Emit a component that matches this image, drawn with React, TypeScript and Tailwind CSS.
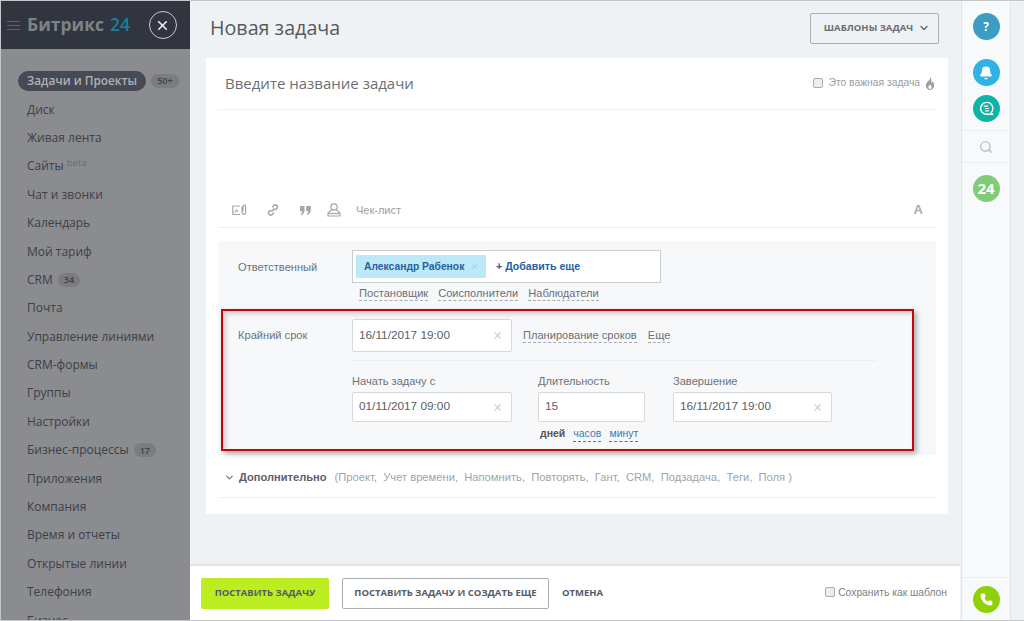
import { X, Phone, Bell, Search, ChevronDown } from 'lucide-react'

const sans = 'font-["Open_Sans",sans-serif]'
const arial = 'font-["Liberation_Sans",Arial,sans-serif]'

const menu: { label: string; badge?: string; sup?: string; active?: boolean }[] = [
  { label: 'Задачи и Проекты', badge: '50+', active: true },
  { label: 'Диск' },
  { label: 'Живая лента' },
  { label: 'Сайты', sup: 'beta' },
  { label: 'Чат и звонки' },
  { label: 'Календарь' },
  { label: 'Мой тариф' },
  { label: 'CRM', badge: '34' },
  { label: 'Почта' },
  { label: 'Управление линиями' },
  { label: 'CRM-формы' },
  { label: 'Группы' },
  { label: 'Настройки' },
  { label: 'Бизнес-процессы', badge: '17' },
  { label: 'Приложения' },
  { label: 'Компания' },
  { label: 'Время и отчеты' },
  { label: 'Открытые линии' },
  { label: 'Телефония' },
  { label: 'Бизнес' },
]

function Sidebar() {
  return (
    <aside className={`w-[189px] shrink-0 h-full bg-[#8b8c8f] overflow-hidden ${sans}`}>
      <div className="h-[48px] bg-[#30353f] flex items-center pl-[6px] whitespace-nowrap">
        <div className="w-[13px] flex flex-col gap-[3px] mr-[7px]">
          <span className="h-px bg-[#5d6167]" />
          <span className="h-px bg-[#5d6167]" />
          <span className="h-px bg-[#5d6167]" />
        </div>
        <span className="text-[17.5px] font-bold text-[#7f8286] leading-none">Битрикс</span>
        <span className="text-[17.5px] font-semibold text-[#1b7d9f] leading-none ml-[6px]">24</span>
        <div className="ml-[19px] w-[28px] h-[28px] rounded-full border-[1.5px] border-[#c8cacc] flex items-center justify-center">
          <X size={15} strokeWidth={2.6} className="text-[#f0f0f0]" />
        </div>
      </div>
      <nav className="pt-[18px]">
        {menu.map(m => (
          <div key={m.label} className="h-[28.4px] flex items-center pl-[26px] text-[12px] text-[#3d4045] whitespace-nowrap">
            {m.active ? (
              <span className="-ml-[9px] h-[20px] pl-[9px] pr-[9px] rounded-full bg-[#454a54] text-[#b0b1b4] text-[11.8px] font-semibold flex items-center">{m.label}</span>
            ) : (
              <span>{m.label}</span>
            )}
            {m.sup && <span className="text-[9.5px] text-[#6a6b6e] ml-[3px] mb-[6px]">{m.sup}</span>}
            {m.badge && (
              <span className="ml-[5px] h-[14px] px-[6px] rounded-full bg-[#7b7c7f] text-[9px] font-semibold text-[#3d4045] flex items-center">{m.badge}</span>
            )}
          </div>
        ))}
      </nav>
    </aside>
  )
}

function Dashed({ children, blue }: { children: string; blue?: boolean }) {
  return (
    <span className={`border-b border-dashed leading-[14px] whitespace-nowrap ${blue ? 'text-[#3f78b8] border-[#3f78b8]' : 'text-[#6b7078] border-[#a5aab0]'}`}>{children}</span>
  )
}

function DateInput({ value, w, h }: { value: string; w: string; h: string }) {
  return (
    <div className={`${w} ${h} bg-white border border-[#d5d9dc] rounded-[2px] flex items-center justify-between pl-[6px] pr-[8px] text-[11.8px] text-[#5a5e65]`}>
      <span>{value}</span>
      <X size={11} strokeWidth={2.5} className="text-[#cfd2d5]" />
    </div>
  )
}

function Form() {
  return (
    <div className={`ml-[16px] mr-[12px] bg-white px-[12px] pb-[16px] ${arial}`}>
      <div className="h-[51px] ml-[7px] flex items-center justify-between pb-[1px]">
        <span className={`text-[15px] text-[#6b6f74] ${sans}`}>Введите название задачи</span>
        <div className="flex items-center text-[10.3px] text-[#9a9da1] mr-[1px] whitespace-nowrap">
          <span className="w-[10px] h-[10px] rounded-[2px] bg-[#eceef0] border border-[#a8abaf] mr-[6px]" />
          Это важная задача
          <svg width="10" height="13" viewBox="0 0 10 13" className="ml-[5px]">
            <path d="M5.2 0c.4 2-1 3-2.4 4.6C1.600 6 .8 7.200.8 8.600.8 11 2.700 13 5 13s4.200-2 4.200-4.400c0-2-1-3.400-1.700-4.300-.2 1-.7 1.500-1.200 1.700C6.600 4 6.500 1.600 5.200 0Z" fill="#9a9da1" />
            <path d="M5 7.500c-1 1-1.600 1.700-1.600 2.800A1.600 1.600 0 0 0 5 12a1.600 1.600 0 0 0 1.600-1.700c0-1.100-.7-1.800-1.600-2.800Z" fill="#fff" />
          </svg>
        </div>
      </div>
      <div className="border-t border-[#eef0f2] h-[78px]" />
      <div className="h-[41px] pt-[6px] border-b border-[#eef0f2] flex items-center pl-[14px] text-[#a3a7ab]">
        <svg width="15" height="13" viewBox="0 0 15 13" fill="none" stroke="currentColor" strokeWidth="1.2">
          <path d="M8 2H.8v8.500H8" />
          <path d="M2.500 8.500 4.500 6l1.500 2" />
          <path d="M10 2.500v6a1.800 1.800 0 0 0 3.600 0V2.500a1.300 1.300 0 0 0-2.600 0v5" />
        </svg>
        <svg width="12" height="12" viewBox="0 0 13 13" fill="none" stroke="currentColor" strokeWidth="1.7" className="ml-[20px]">
          <path d="M5.500 3.500 7.500 1.600a2 2 0 0 1 3 0 2 2 0 0 1 .4 2.900L9 6.500" />
          <path d="M7.500 9.500 5.500 11.400a2 2 0 0 1-3 0 2 2 0 0 1-.4-2.900L4 6.500" />
          <path d="M4.700 8.300 8.300 4.700" />
        </svg>
        <svg width="11" height="9" viewBox="0 0 11 9" fill="currentColor" className="ml-[21px]">
          <path d="M0 0h4.500v4.500C4.500 7 3 8.500 1 9L.5 7.800C1.700 7.400 2.300 6.500 2.300 5.200H0Z" />
          <path d="M6.200 0h4.500v4.500c0 2.500-1.500 4-3.500 4.500l-.5-1.200c1.200-.4 1.800-1.300 1.800-2.600H6.200Z" />
        </svg>
        <svg width="14" height="14" viewBox="0 0 14 14" fill="none" stroke="currentColor" strokeWidth="1.2" className="ml-[16px]">
          <circle cx="7" cy="4" r="3.200" />
          <path d="M4.800 6.800 1 10v3h12v-3L9.200 6.800" />
          <path d="M1.500 10.500h11" />
        </svg>
        <span className="ml-[15px] text-[11px] text-[#9a9ea3]">Чек-лист</span>
        <span className="ml-auto mr-[13px] text-[13px] font-bold text-[#a8acb0]">A</span>
      </div>

      <div className="mt-[13px] bg-[#f7f8fa] pb-[7px]">
        <div className="flex pt-[9px]">
          <span className="w-[134px] pl-[20px] pt-[9px] text-[11.1px] text-[#6e7277]">Ответственный</span>
          <div className="w-[309px] h-[33px] bg-white border border-[#c9ced2] flex items-center pl-[3px] whitespace-nowrap">
            <div className="h-[23px] w-[130px] bg-[#bce8f7] flex items-center pl-[8px] text-[10.3px] font-bold text-[#25609f]">
              Александр Рабенок
              <X size={7} strokeWidth={3} className="ml-[7px] text-[#a5bdc7]" />
            </div>
            <span className="ml-[10px] text-[10.6px] font-bold text-[#25609f]">+ Добавить еще</span>
          </div>
        </div>
        <div className="flex gap-[10px] pl-[141px] pt-[3px] text-[11.1px]">
          <Dashed>Постановщик</Dashed>
          <Dashed>Соисполнители</Dashed>
          <Dashed>Наблюдатели</Dashed>
        </div>

        <div className="flex pt-[18px] items-start">
          <span className="w-[134px] pl-[20px] pt-[8px] text-[11.1px] text-[#6e7277]">Крайний срок</span>
          <DateInput value="16/11/2017 19:00" w="w-[160px]" h="h-[33px]" />
          <div className="flex gap-[11px] ml-[11px] pt-[9px] text-[11.1px]">
            <Dashed>Планирование сроков</Dashed>
            <Dashed>Еще</Dashed>
          </div>
        </div>
        <div className="ml-[134px] mr-[60px] mt-[8px] border-t border-[#eceef1]" />
        <div className="flex pl-[134px] pt-[12px] pb-[6px] text-[11.1px] text-[#6e7277]">
          <div className="w-[186px]">
            <div className="h-[15px] mb-[4px]">Начать задачу с</div>
            <DateInput value="01/11/2017 09:00" w="w-[160px]" h="h-[30px]" />
          </div>
          <div className="w-[135px]">
            <div className="h-[15px] mb-[4px]">Длительность</div>
            <div className="w-[107px] h-[30px] bg-white border border-[#d5d9dc] rounded-[2px] flex items-center pl-[6px] text-[11.8px] text-[#5a5e65]">15</div>
            <div className="flex gap-[8px] pt-[4px] pl-[2px] text-[10.5px]">
              <span className="font-bold text-[#555]">дней</span>
              <Dashed blue>часов</Dashed>
              <Dashed blue>минут</Dashed>
            </div>
          </div>
          <div>
            <div className="h-[15px] mb-[4px]">Завершение</div>
            <DateInput value="16/11/2017 19:00" w="w-[159px]" h="h-[30px]" />
          </div>
        </div>
      </div>

      <div className="h-[43px] pt-[3px] border-b border-[#eef0f2] flex items-center pl-[6px] whitespace-nowrap">
        <ChevronDown size={11} strokeWidth={3} className="text-[#7a7f85]" />
        <span className="ml-[4px] text-[11.1px] font-bold text-[#5b6068]">Дополнительно</span>
        <span className="ml-[8px] text-[11.2px] text-[#a0a4a9]">(Проект,&nbsp; Учет времени,&nbsp; Напомнить,&nbsp; Повторять,&nbsp; Гант,&nbsp; CRM,&nbsp; Подзадача,&nbsp; Теги,&nbsp; Поля )</span>
      </div>
    </div>
  )
}

function Round({ color, children }: { color: string; children: React.ReactNode }) {
  return <div className={`w-[27px] h-[27px] rounded-full flex items-center justify-center text-white ${color}`}>{children}</div>
}

function RightBar() {
  return (
    <aside className={`w-[64px] shrink-0 h-full flex pl-px bg-[#eef2f4] ${sans}`}>
      <div className="w-[50px] h-full bg-[#f7f9fa] border-x border-[#dfe6ea] flex flex-col items-center">
        <div className="pt-[12px]">
          <Round color="bg-[#3b9dc3]"><span className="text-[12px] font-bold">?</span></Round>
        </div>
        <div className="pt-[19px]">
          <Round color="bg-[#2fb3e4]"><Bell size={14} fill="white" /></Round>
        </div>
        <div className="pt-[9px]">
          <Round color="bg-[#0eb4a6]">
            <svg width="15" height="15" viewBox="0 0 16 16" fill="none" stroke="white" strokeWidth="1.5">
              <path d="M8 1.500a6.300 6.300 0 1 0 0 12.600h6.300l-1.300-2A6.300 6.300 0 0 0 8 1.500Z" />
              <path d="M5 5.500h5M6.500 8h4M6.500 10.500h4" strokeWidth="1.2" />
            </svg>
          </Round>
        </div>
        <div className="mt-[8px] w-full h-[33px] border-y border-[#e9edf0] flex items-center justify-center">
          <Search size={14} className="text-[#b1b5b9]" />
        </div>
        <div className="pt-[12px]">
          <Round color="bg-[#83cb78]"><span className="text-[15px] font-bold">24</span></Round>
        </div>
        <div className="mt-auto w-full border-t border-[#e9edf0] flex justify-center pt-[8px] pb-[7px]">
          <Round color="bg-[#8fd006]"><Phone size={13} fill="white" /></Round>
        </div>
      </div>
    </aside>
  )
}

export default function App() {
  return (
    <div className="w-[1024px] h-[621px] relative overflow-hidden flex bg-[#eef2f4] border-l border-y border-[#c5c6c7]">
      <Sidebar />
      <main className="flex-1 min-w-0 h-full flex flex-col">
        <div className={`h-[57px] flex items-center justify-between pl-[20px] pr-[21px] ${sans}`}>
          <h1 className="text-[19.7px] text-[#555a60] pb-[4px]">Новая задача</h1>
          <div className="w-[129px] h-[31px] mb-[3px] pl-[5px] border border-[#a9aeb3] rounded-[2px] flex items-center justify-center gap-[5px] text-[9.5px] font-bold text-[#6a6f76] whitespace-nowrap">
            ШАБЛОНЫ ЗАДАЧ
            <ChevronDown size={12} strokeWidth={3} />
          </div>
        </div>
        <Form />
        <div className="mt-auto h-[56px] bg-white border-t-2 border-[#dfe3e6] flex items-center pl-[11px] pr-[13px] whitespace-nowrap">
          <div className={`w-[128px] h-[31px] rounded-[2px] bg-[#bbed21] flex items-center justify-center text-[9.5px] font-bold text-[#535c69] ${sans}`}>ПОСТАВИТЬ ЗАДАЧУ</div>
          <div className={`ml-[13px] w-[207px] h-[31px] rounded-[2px] border border-[#a9aeb3] flex items-center justify-center text-[9.5px] font-bold text-[#535c69] ${sans}`}>ПОСТАВИТЬ ЗАДАЧУ И СОЗДАТЬ ЕЩЕ</div>
          <span className={`ml-[13px] text-[9.5px] font-bold text-[#535c69] ${sans}`}>ОТМЕНА</span>
          <div className={`ml-auto flex items-center text-[10.3px] text-[#7d8186] ${arial}`}>
            <span className="w-[10px] h-[10px] rounded-[2px] bg-[#eceef0] border border-[#a8abaf] mr-[3px] -mt-[3px]" />
            Сохранить как шаблон
          </div>
        </div>
      </main>
      <RightBar />
      {/* красная рамка поверх скриншота */}
      <div className="absolute left-[220px] top-[308px] w-[693px] h-[142px] border-2 border-[#c2070c] shadow-[3px_3px_5px_rgba(90,90,90,0.45),inset_3px_3px_4px_rgba(120,120,120,0.3)] pointer-events-none" />
    </div>
  )
}
